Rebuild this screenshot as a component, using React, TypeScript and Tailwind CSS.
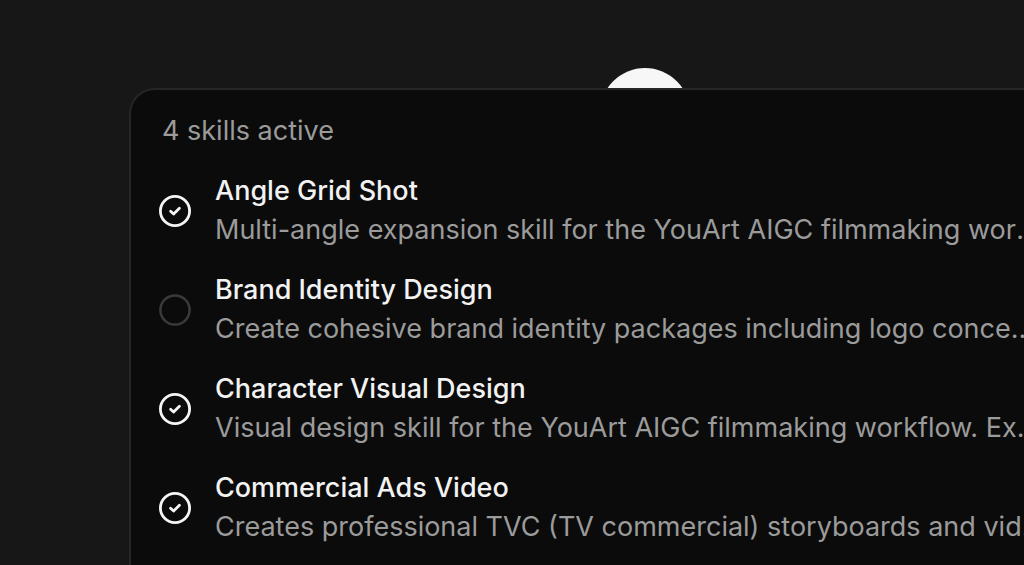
import React from "react";

const skills = [
  { name: "Angle Grid Shot", desc: "Multi-angle expansion skill for the YouArt AIGC filmmaking workflow. Generates grid shots from multiple camera angles.", active: true },
  { name: "Brand Identity Design", desc: "Create cohesive brand identity packages including logo concepts, color palettes and typography.", active: false },
  { name: "Character Visual Design", desc: "Visual design skill for the YouArt AIGC filmmaking workflow. Explores character looks and costumes.", active: true },
  { name: "Commercial Ads Video", desc: "Creates professional TVC (TV commercial) storyboards and video scripts for brands.", active: true },
];

function CheckIcon({ active }: { active: boolean }) {
  if (!active) {
    return (
      <svg width="34" height="34" viewBox="0 0 34 34" className="shrink-0">
        <circle cx="17" cy="17" r="14.6" fill="none" stroke="#3a3a3a" strokeWidth="2.5" />
      </svg>
    );
  }
  return (
    <svg width="34" height="34" viewBox="0 0 34 34" className="shrink-0">
      <circle cx="17" cy="17" r="14.6" fill="none" stroke="#f5f5f5" strokeWidth="2.8" />
      <path d="M12.6 17.3 L15.6 20.1 L21.4 14.2" fill="none" stroke="#f5f5f5" strokeWidth="2.8" strokeLinecap="round" strokeLinejoin="round" />
    </svg>
  );
}

export default function App() {
  return (
    <div className="relative h-[565px] w-[1024px] overflow-hidden bg-[#171717]" style={{ fontFamily: "Inter, 'Noto Sans', sans-serif" }}>
      <div className="absolute left-[600px] top-[68px] h-[90px] w-[90px] rounded-full bg-[#f7f7f7]" />
      <div className="relative ml-[129px] mt-[88px] w-[942px] rounded-tl-[26px] border-l-2 border-t-2 border-[#262626] bg-[#0b0b0b] pb-10">
        <div className="px-[31px] pt-[22px] text-[27px] leading-[38px] text-[#9b9b9b]">4 skills active</div>
        <div className="mt-[22px] flex flex-col">
          {skills.map((s) => (
            <div key={s.name} className="flex items-center gap-[23px] pl-[27px] pb-[22px]">
              <CheckIcon active={s.active} />
              <div className="min-w-0 flex-1 pr-[24px]">
                <div className="truncate text-[27px] font-medium leading-[38px] text-[#f2f2f2]">{s.name}</div>
                <div className="mt-[1px] truncate text-[27px] leading-[38px] text-[#9b9b9b]">{s.desc}</div>
              </div>
            </div>
          ))}
        </div>
      </div>
    </div>
  );
}
